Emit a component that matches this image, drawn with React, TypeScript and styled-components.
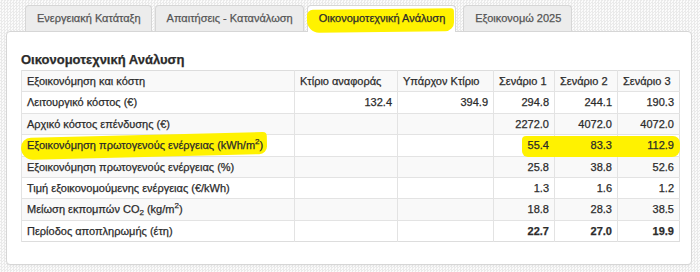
import styled, { createGlobalStyle, css } from "styled-components";

const Global = createGlobalStyle`
  html, body {
    margin: 0;
    padding: 0;
  }
  body {
    font-family: "Liberation Sans", Arial, sans-serif;
    font-size: 11px;
    color: #2b2b2b;
    -webkit-text-stroke: 0.25px currentColor;
    background-color: #f6f6f6;
    background-image: repeating-conic-gradient(#eaeaea 0 25%, #fbfbfb 0 50%);
    background-size: 3px 3px;
    min-height: 272px;
  }
`

const Page = styled.div`
  padding: 5px 8px 7px 6px;
`

const TabBar = styled.div`
  display: flex;
  gap: 3px;
  padding-left: 19px;
  position: relative;
  z-index: 1;
`

const Tab = styled.div<{ $active?: boolean }>`
  position: relative;
  height: 25px;
  line-height: 25px;
  padding: 0 10px 0 11px;
  border: 1px solid #d6d6d6;
  border-bottom: none;
  border-radius: 4px 4px 0 0;
  background: #ececec;
  color: #555;
  white-space: nowrap;

  ${p => p.$active && css`
    background: #fff;
    color: #2b2b2b;
    height: 26px;
    margin-bottom: -1px;
    margin-right: 4px;

    &::before {
      content: "";
      position: absolute;
      left: -1px;
      right: 2px;
      top: 3px;
      bottom: 0px;
      background: #fff200;
      border-radius: 6px 3px 9px 12px;
      transform: rotate(-0.6deg);
    }
  `}
`

const TabLabel = styled.span`
  position: relative;
`

const Panel = styled.div`
  background: #fff;
  border: 1px solid #d6d6d6;
  border-radius: 4px;
  padding: 19px 11px 22px 14px;
  box-shadow: 0 1px 1px rgba(0, 0, 0, 0.04);
`

const Title = styled.h4`
  margin: 0 0 1px 0;
  font-size: 13px;
  font-weight: bold;
  line-height: 18px;
  color: #2b2b2b;
`

const Table = styled.table`
  border-collapse: collapse;
  width: 658px;
  table-layout: fixed;
  border: 1px solid #dddddd;
`

const Row = styled.tr<{ $striped?: boolean }>`
  background: ${p => (p.$striped ? "#f9f9f9" : "#fff")};
`

const cellBase = css`
  height: 14px;
  padding: 3px 5px 3.4px 5px;
  line-height: 14px;
  border-left: 1px solid #e3e3e3;
  white-space: nowrap;
`

const Cell = styled.td<{ $num?: boolean; $bold?: boolean; $mark?: "first" | "mid" }>`
  ${cellBase}
  border-top: 1px solid #e3e3e3;
  text-align: ${p => (p.$num ? "right" : "left")};
  font-weight: ${p => (p.$bold ? "bold" : "normal")};
  position: relative;

  ${p => p.$mark && css`
    &::before {
      content: "";
      position: absolute;
      left: ${p.$mark === "first" ? "28px" : "0"};
      right: -1px;
      top: 1px;
      bottom: -1px;
      background: #fff200;
      border-radius: ${p.$mark === "first" ? "4px 0 0 6px" : "0"};
    }
  `}
`

const LastMarkCell = styled(Cell)`
  &::before {
    right: -1px;
    border-radius: 0 7px 8px 0;
  }
`

const HeadCell = styled.th`
  ${cellBase}
  text-align: left;
  font-weight: normal;
`

const Val = styled.span`
  position: relative;
`

const Marker = styled.span`
  position: relative;

  &::before {
    content: "";
    position: absolute;
    left: -6px;
    right: -4px;
    top: -4px;
    bottom: -6px;
    background: #fff200;
    border-radius: 10px 4px 8px 12px;
    transform: rotate(-1.4deg);
  }
`

const Sub = styled.sub`
  font-size: 8px;
  vertical-align: -2px;
  line-height: 0;
`

const Sup = styled.sup`
  font-size: 8px;
  vertical-align: 5px;
  line-height: 0;
`

type DataRow = {
  label: React.ReactNode
  values: string[]
  bold?: boolean
  marked?: boolean
}

const rows: DataRow[] = [
  { label: "Λειτουργικό κόστος (€)", values: ["132.4", "394.9", "294.8", "244.1", "190.3"] },
  { label: "Αρχικό κόστος επένδυσης (€)", values: ["", "", "2272.0", "4072.0", "4072.0"] },
  {
    label: <>Εξοικονόμηση πρωτογενούς ενέργειας (kWh/m<Sup>2</Sup>)</>,
    values: ["", "", "55.4", "83.3", "112.9"],
    marked: true,
  },
  { label: "Εξοικονόμηση πρωτογενούς ενέργειας (%)", values: ["", "", "25.8", "38.8", "52.6"] },
  { label: "Τιμή εξοικονομούμενης ενέργειας (€/kWh)", values: ["", "", "1.3", "1.6", "1.2"] },
  {
    label: <>Μείωση εκπομπών CO<Sub>2</Sub> (kg/m<Sup>2</Sup>)</>,
    values: ["", "", "18.8", "28.3", "38.5"],
  },
  { label: "Περίοδος αποπληρωμής (έτη)", values: ["", "", "22.7", "27.0", "19.9"], bold: true },
]

const tabs = ["Ενεργειακή Κατάταξη", "Απαιτήσεις - Κατανάλωση", "Οικονομοτεχνική Ανάλυση", "Εξοικονομώ 2025"]
const columns = ["Εξοικονόμηση και κόστη", "Κτίριο αναφοράς", "Υπάρχον Κτίριο", "Σενάριο 1", "Σενάριο 2", "Σενάριο 3"]
const widths = [273, 103, 96, 61, 63, 62]

export default function App() {
  return <Page>
    <Global />
    <TabBar>
      {tabs.map((t, i) => (
        <Tab key={t} $active={i === 2}>
          <TabLabel>{t}</TabLabel>
        </Tab>
      ))}
    </TabBar>
    <Panel>
      <Title>Οικονομοτεχνική Ανάλυση</Title>
      <Table>
        <colgroup>
          {widths.map((w, i) => <col key={i} style={{ width: w }} />)}
        </colgroup>
        <thead>
          <Row $striped>
            {columns.map(c => <HeadCell key={c}>{c}</HeadCell>)}
          </Row>
        </thead>
        <tbody>
          {rows.map((r, i) => (
            <Row key={i} $striped={i % 2 === 1}>
              <Cell>{r.marked ? <Marker><Val>{r.label}</Val></Marker> : r.label}</Cell>
              {r.values.map((v, j) => {
                if (r.marked && j === 4) {
                  return <LastMarkCell key={j} $num $mark="mid"><Val>{v}</Val></LastMarkCell>
                }
                const mark = r.marked && j >= 2 ? (j === 2 ? "first" : "mid") : undefined
                return <Cell key={j} $num $bold={r.bold} $mark={mark}><Val>{v}</Val></Cell>
              })}
            </Row>
          ))}
        </tbody>
      </Table>
    </Panel>
  </Page>
}
